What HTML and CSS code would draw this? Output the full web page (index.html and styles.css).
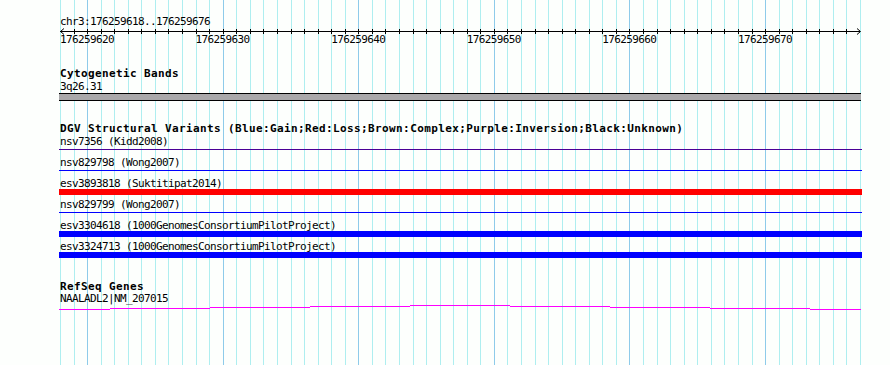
FILE: index.html
```html
<!DOCTYPE html>
<html lang="en">
    <head>
        <meta charset="UTF-8" />
        <title>chr3:176259618..176259676</title>
        <link rel="stylesheet" href="styles.css">
    </head>
    <body>
        <div class="panel">
            <!-- base grid, one line per base -->
            <svg class="grid" width="890" height="365">
                <path class="grid-minor" d="M60.5 0V365M74.5 0V365M101.5 0V365M114.5 0V365M128.5 0V365M141.5 0V365M155.5 0V365M168.5 0V365M182.5 0V365M196.5 0V365M209.5 0V365M236.5 0V365M250.5 0V365M263.5 0V365M277.5 0V365M291.5 0V365M304.5 0V365M318.5 0V365M331.5 0V365M345.5 0V365M372.5 0V365M385.5 0V365M399.5 0V365M413.5 0V365M426.5 0V365M440.5 0V365M453.5 0V365M467.5 0V365M480.5 0V365M507.5 0V365M521.5 0V365M535.5 0V365M548.5 0V365M562.5 0V365M575.5 0V365M589.5 0V365M602.5 0V365M616.5 0V365M643.5 0V365M657.5 0V365M670.5 0V365M684.5 0V365M697.5 0V365M711.5 0V365M724.5 0V365M738.5 0V365M752.5 0V365M779.5 0V365M792.5 0V365M806.5 0V365M819.5 0V365M833.5 0V365M846.5 0V365M860.5 0V365" />
                <path class="grid-major" d="M87.5 0V365M223.5 0V365M358.5 0V365M494.5 0V365M629.5 0V365M765.5 0V365" />
            </svg>

            <div class="ruler-title">chr3:176259618..176259676</div>
            <svg class="ruler" width="890" height="5">
                <path d="M60 3.5H860" />
                <path d="M74.5 1V6M87.5 1V6M101.5 1V6M114.5 1V6M128.5 1V6M141.5 1V6M155.5 1V6M168.5 1V6M182.5 1V6M196.5 1V6M209.5 1V6M223.5 1V6M236.5 1V6M250.5 1V6M263.5 1V6M277.5 1V6M291.5 1V6M304.5 1V6M318.5 1V6M331.5 1V6M345.5 1V6M358.5 1V6M372.5 1V6M385.5 1V6M399.5 1V6M413.5 1V6M426.5 1V6M440.5 1V6M453.5 1V6M467.5 1V6M480.5 1V6M494.5 1V6M507.5 1V6M521.5 1V6M535.5 1V6M548.5 1V6M562.5 1V6M575.5 1V6M589.5 1V6M602.5 1V6M616.5 1V6M629.5 1V6M643.5 1V6M657.5 1V6M670.5 1V6M684.5 1V6M697.5 1V6M711.5 1V6M724.5 1V6M738.5 1V6M752.5 1V6M765.5 1V6M779.5 1V6M792.5 1V6M806.5 1V6M819.5 1V6M833.5 1V6M846.5 1V6" />
                <path class="arrow" d="M64 0.5L60.5 3.5L64 6.5M857 0.5L860.5 3.5L857 6.5" />
            </svg>
            <div class="ruler-labels">
                <span>176259620</span>
                <span>176259630</span>
                <span>176259640</span>
                <span>176259650</span>
                <span>176259660</span>
                <span>176259670</span>
            </div>

            <section class="track cyto">
                <div class="track-title">Cytogenetic Bands</div>
                <div class="feature-label">3q26.31</div>
                <div class="band"></div>
            </section>

            <section class="track dgv">
                <div class="track-title">DGV Structural Variants (Blue:Gain;Red:Loss;Brown:Complex;Purple:Inversion;Black:Unknown)</div>
                <div class="feature">
                    <div class="feature-label">nsv7356 (Kidd2008)</div>
                    <div class="glyph line purple"></div>
                </div>
                <div class="feature">
                    <div class="feature-label">nsv829798 (Wong2007)</div>
                    <div class="glyph line blue"></div>
                </div>
                <div class="feature">
                    <div class="feature-label">esv3893818 (Suktitipat2014)</div>
                    <div class="glyph bar red"></div>
                </div>
                <div class="feature">
                    <div class="feature-label">nsv829799 (Wong2007)</div>
                    <div class="glyph line blue"></div>
                </div>
                <div class="feature">
                    <div class="feature-label">esv3304618 (1000GenomesConsortiumPilotProject)</div>
                    <div class="glyph bar blue"></div>
                </div>
                <div class="feature">
                    <div class="feature-label">esv3324713 (1000GenomesConsortiumPilotProject)</div>
                    <div class="glyph bar blue"></div>
                </div>
            </section>

            <section class="track refseq">
                <div class="track-title">RefSeq Genes</div>
                <div class="feature-label">NAALADL2|NM_207015</div>
                <svg class="gene" width="890" height="9">
                    <path d="M59 7.5H110M110 6.5H210M210 5.5H310M310 4.5H410M410 3.5H510M510 4.5H610M610 5.5H710M710 6.5H810M810 7.5H861" />
                </svg>
            </section>
        </div>
    </body>
</html>
```

FILE: styles.css
```css
body {
    margin: 0;
    background-color: #fdfffd;
    color: #000;
    font-family: "DejaVu Sans Mono", "Liberation Mono", monospace;
    font-size: 11px;
    letter-spacing: -0.62px;
}

.panel {
    position: relative;
    z-index: 0;
    width: 890px;
    height: 365px;
    padding-top: 15px;
    box-sizing: border-box;
    overflow: hidden;
}

.grid {
    position: absolute;
    top: 0;
    left: 0;
    z-index: -1;
}

.grid-minor {
    stroke: #aeeef0;
    stroke-width: 1;
}

.grid-major {
    stroke: #8ecbea;
    stroke-width: 1;
}

.ruler-title,
.feature-label {
    padding-left: 60px;
    line-height: 13px;
    height: 13px;
    white-space: nowrap;
}

.ruler {
    display: block;
    overflow: visible;
    stroke: #000;
    stroke-width: 1;
    fill: none;
    shape-rendering: crispEdges;
}

.ruler .arrow {
    shape-rendering: auto;
}

.ruler-labels {
    display: flex;
    padding-left: 60px;
    line-height: 13px;
    height: 13px;
}

.ruler-labels span {
    flex: 0 0 135.593px;
}

.track-title {
    padding-left: 60px;
    font-weight: bold;
    font-size: 11px;
    letter-spacing: 0.38px;
    line-height: 13px;
    height: 13px;
    white-space: nowrap;
}

.cyto {
    margin-top: 21px;
}

.band {
    margin-left: 59px;
    width: 802px;
    height: 6px;
    background-color: #a9a8aa;
    border-top: 1px solid #000;
    border-bottom: 1px solid #000;
}

.dgv {
    margin-top: 21px;
}

.feature {
    height: 21px;
}

.glyph {
    margin-left: 59px;
    width: 803px;
}

.line {
    height: 1px;
    margin-top: 1px;
}

.bar {
    height: 6px;
    margin-top: -1px;
}

.purple {
    background-color: #4a0096;
}

.blue {
    background-color: #0000ff;
}

.red {
    background-color: #ff0000;
}

.refseq {
    margin-top: 20px;
}

.refseq .track-title {
    line-height: 11px;
    height: 11px;
}

.gene {
    display: block;
    margin-top: -3px;
    stroke: #ff00ff;
    stroke-width: 1;
    fill: none;
    shape-rendering: crispEdges;
}
```
